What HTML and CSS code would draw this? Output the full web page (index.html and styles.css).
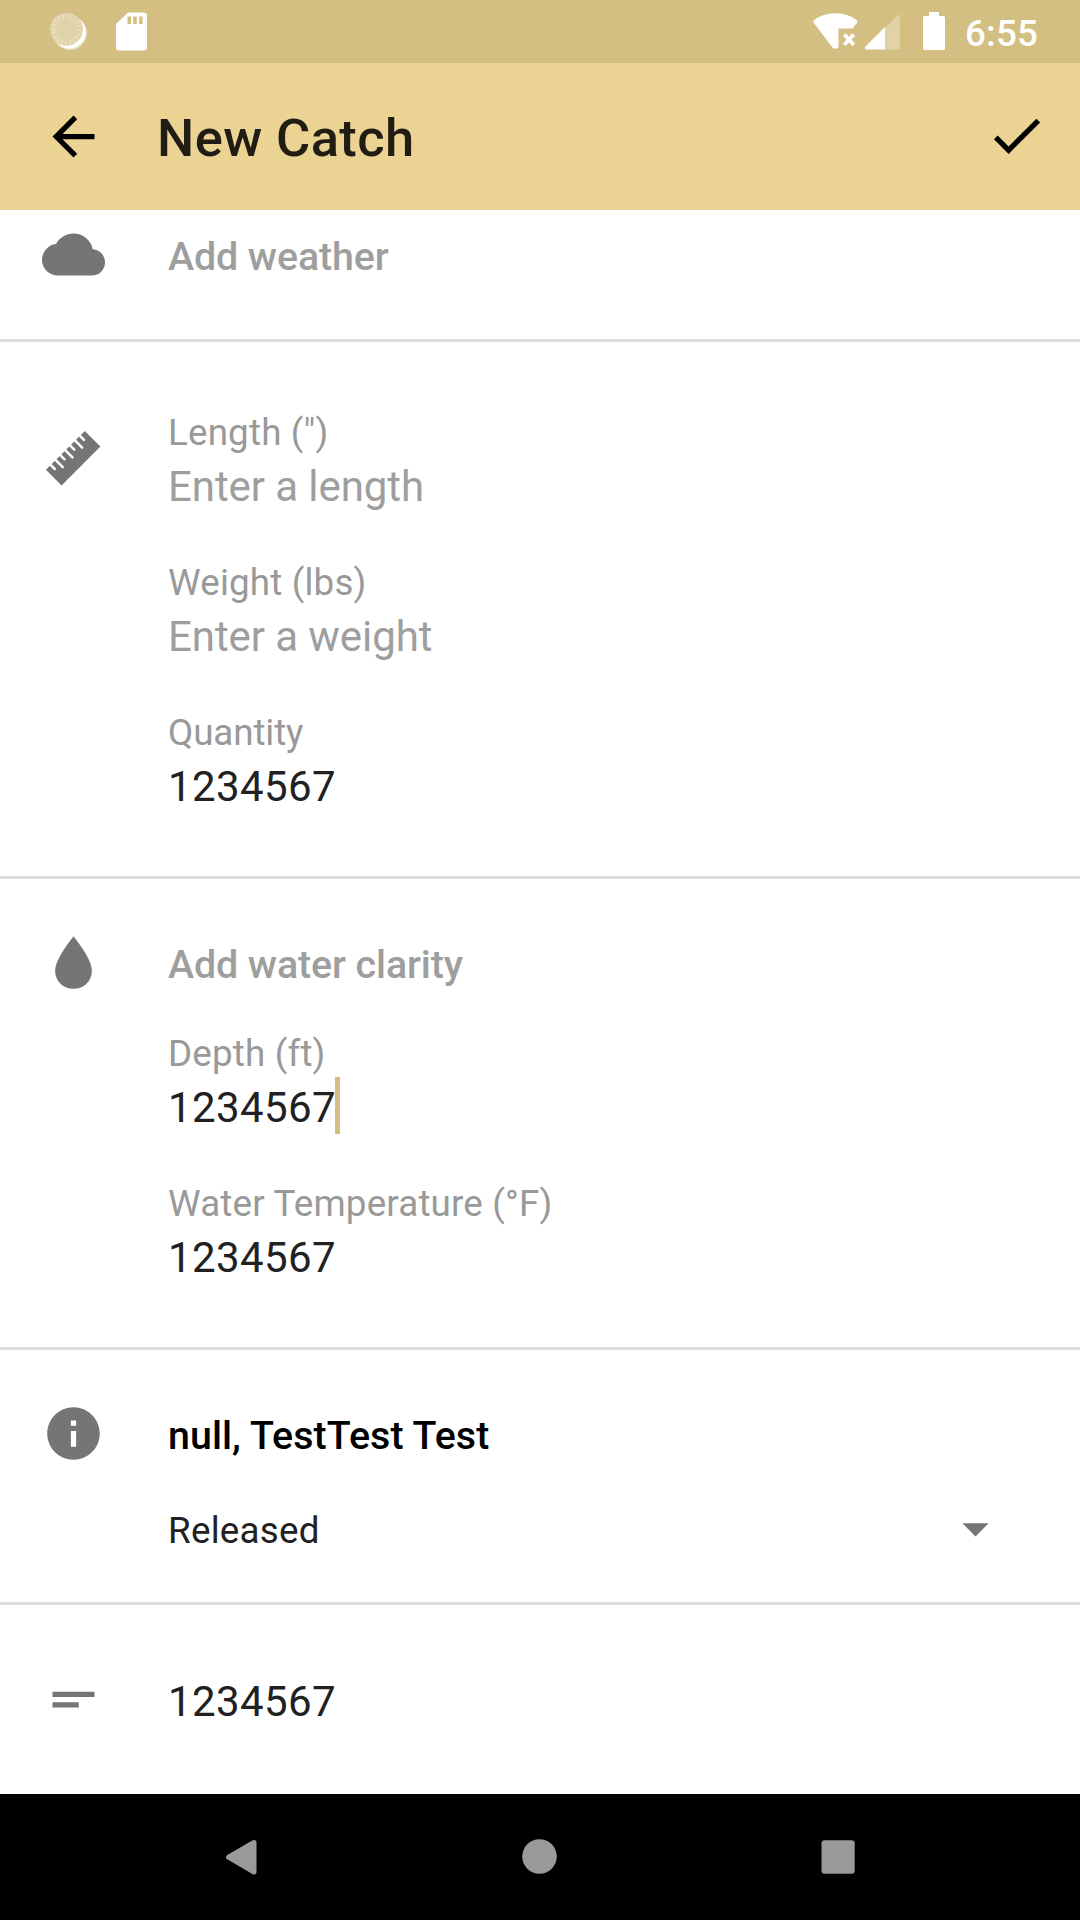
FILE: index.html
```html
<!DOCTYPE html>
<html lang="en">
<head>
<meta charset="utf-8">
<title>New Catch</title>
<link rel="stylesheet" href="styles.css">
</head>
<body>
<div class="screen">
  <div class="status-bar">
    <svg class="status-sync" viewBox="0 0 38 39">
      <circle cx="20" cy="21" r="17" fill="#e6dab8"/>
      <circle cx="19.500" cy="20.200" r="16.500" fill="#fff"/>
      <circle cx="16.500" cy="17.200" r="16.500" fill="#e1d3a9"/>
      <circle class="sync-ticks" cx="16.500" cy="17.500" r="13.200" pathLength="100"/>
    </svg>
    <svg class="status-sd" viewBox="0 0 31 39"><path fill="#fff" fill-rule="evenodd" d="M12 .5H27.500Q31 .5 31 4V35Q31 38.500 27.500 38.500H3.500Q0 38.500 0 35V12ZM11.500 4.500V12H15V4.500ZM17.300 4.500V12H20.800V4.500ZM23.100 4.500V12H26.600V4.500Z"/></svg>
    <div class="status-right">
      <svg class="status-wifi" viewBox="0 0 45 36">
        <path fill="#fff" d="M.5 9.500Q-.3 8 1.200 7Q10 .3 22.500 .3T43.500 7Q45 8 44.200 9.500L39.500 15.500H25.500V34.500Q22 37 19.500 34.500Z"/>
        <path stroke="#fff" stroke-width="3.800" d="M31.300 21.500L40.700 31.700M40.700 21.500L31.300 31.700"/>
      </svg>
      <svg class="status-signal" viewBox="0 0 35 36">
        <path fill="#e1d3a9" d="M20 14.500L32.500 1.200Q35 -.3 35 2.500V33.500Q35 35.500 33 35.500H20Z"/>
        <path fill="#fff" d="M20 13V35.500H1.500Q-1 35 .5 32.500Z"/>
      </svg>
      <svg class="status-battery" viewBox="0 0 22 38"><path fill="#fff" d="M6 0H16V4H20.500Q22 4 22 5.500V36.500Q22 38 20.500 38H1.500Q0 38 0 36.500V5.500Q0 4 1.500 4H6Z"/></svg>
      <span class="clock">6:55</span>
    </div>
  </div>

  <header class="app-bar">
    <svg class="icon" viewBox="0 0 24 24"><path d="M20 11H7.830l5.590-5.590L12 4l-8 8 8 8 1.410-1.410L7.830 13H20z"/></svg>
    <h1 class="title">New Catch</h1>
    <svg class="icon done" viewBox="0 0 24 24"><path d="M9 16.170L4.830 12l-1.420 1.410L9 19 21 7l-1.410-1.410z"/></svg>
  </header>

  <main class="form">
    <section class="section weather">
      <svg class="icon" viewBox="0 0 24 24"><path d="M19.350 10.040A7.490 7.490 0 0 0 12 4C9.110 4 6.600 5.640 5.350 8.040A5.994 5.994 0 0 0 0 14c0 3.310 2.690 6 6 6h13c2.760 0 5-2.240 5-5 0-2.640-2.050-4.780-4.650-4.960z"/></svg>
      <div class="fields"><div class="action">Add weather</div></div>
    </section>

    <section class="section size">
      <svg class="icon" viewBox="0 0 24 24">
        <path d="M16.300 1.500L22.250 7.450L7.450 22.250L1.500 16.300Z"/>
        <path class="slits" d="M3 14.100L4.900 16M4.850 12.250L7.900 15.300M6.700 10.400L8.600 12.300M8.550 8.550L11.600 11.600M10.400 6.700L12.300 8.600M12.250 4.850L15.300 7.900M14.100 3L16 4.900"/>
      </svg>
      <div class="fields">
        <div class="field"><div class="label">Length (")</div><div class="value hint">Enter a length</div></div>
        <div class="field"><div class="label">Weight (lbs)</div><div class="value hint">Enter a weight</div></div>
        <div class="field"><div class="label plain">Quantity</div><div class="value">1234567</div></div>
      </div>
    </section>

    <section class="section water">
      <svg class="icon" viewBox="0 0 24 24"><path d="M12 2C14.500 5.200 19 11.200 19 15.200C19 19.100 15.900 22 12 22S5 19.100 5 15.200C5 11.200 9.500 5.200 12 2Z"/></svg>
      <div class="fields">
        <div class="action">Add water clarity</div>
        <div class="field"><div class="label">Depth (ft)</div><div class="value">1234567<span class="caret"></span></div></div>
        <div class="field"><div class="label">Water Temperature (°F)</div><div class="value">1234567</div></div>
      </div>
    </section>

    <section class="section details">
      <svg class="icon" viewBox="0 0 24 24"><path d="M12 2C6.480 2 2 6.480 2 12s4.480 10 10 10 10-4.480 10-10S17.520 2 12 2zm1 15h-2v-6h2v6zm0-8h-2V7h2v2z"/></svg>
      <div class="fields">
        <div class="action filled">null, TestTest Test</div>
        <div class="select">
          <span class="select-text">Released</span>
          <svg class="icon" viewBox="0 0 24 24"><path d="M7 10l5 5 5-5z"/></svg>
        </div>
      </div>
    </section>

    <section class="section notes">
      <svg class="icon" viewBox="0 0 24 24"><path d="M4 9h16v2H4zm0 4h10v2H4z"/></svg>
      <div class="fields"><div class="value">1234567</div></div>
    </section>
  </main>

  <nav class="nav-bar">
    <svg class="nav-icon" viewBox="0 0 48 48"><path stroke="#999" stroke-width="5" stroke-linejoin="round" d="M11.500 24.200L37 9.500V39Z"/></svg>
    <svg class="nav-icon" viewBox="0 0 48 48"><circle cx="23.500" cy="23.500" r="17.300"/></svg>
    <svg class="nav-icon" viewBox="0 0 48 48"><rect x="7.500" y="7.300" width="33.200" height="33.400" rx="3"/></svg>
  </nav>
</div>
</body>
</html>
```
FILE: styles.css
```css
* { box-sizing: border-box; }

body {
  margin: 0;
  background: #fff;
  font-family: Roboto, sans-serif;
  color: #212121;
}

svg { display: block; flex: none; }

.screen {
  display: flex;
  flex-direction: column;
  width: 1080px;
  height: 1920px;
  overflow: hidden;
}

/* Status bar */
.status-bar {
  display: flex;
  align-items: flex-start;
  height: 63px;
  padding: 12px 42px 0 50px;
  background: #d4bf83;
}
.status-sync { width: 38px; height: 39px; }
.sync-ticks {
  fill: none;
  stroke: #eae0c3;
  stroke-width: 5;
  stroke-dasharray: 1.5 3.5;
}
.status-sd { width: 31px; height: 39px; margin-left: 28px; }
.status-right { display: flex; margin-left: auto; }
.status-wifi { width: 45px; height: 36px; margin-top: 1px; }
.status-signal { width: 35px; height: 36px; margin: 2px 0 0 7px; }
.status-battery { width: 22px; height: 38px; margin-left: 23px; }
.clock {
  width: 73px;
  margin-left: 20px;
  font-size: 36.75px;
  font-weight: 500;
  line-height: 43px;
  letter-spacing: 0.2px;
  color: #fff;
}

/* App bar */
.app-bar {
  display: flex;
  align-items: center;
  height: 147px;
  padding: 0 32px 0 42px;
  background: #ead393;
}
.icon { width: 63px; height: 63px; fill: #757575; }
.app-bar .icon { fill: #000; }
.app-bar .done { margin-bottom: 2px; }
.title {
  flex: 1;
  margin: 3px 0 0 52px;
  font-size: 52.5px;
  font-weight: 500;
  line-height: 62px;
  letter-spacing: 0.4px;
  color: #211d14;
}

/* Form sections */
.form { display: flex; flex-direction: column; flex: 1; }
.section {
  display: flex;
  align-items: flex-start;
  gap: 63px;
  padding: 0 84px 0 42px;
  border-bottom: 3px solid #ddd;
}
.slits {
  fill: none;
  stroke: #fff;
  stroke-width: 0.95;
  stroke-linecap: round;
}
.fields { flex: 1; display: flex; flex-direction: column; }
.field { height: 150px; }
.action {
  font-size: 39.375px;
  font-weight: 500;
  line-height: 46px;
  letter-spacing: -0.1px;
  color: #9e9e9e;
}
.action.filled { letter-spacing: 0.06px; color: #000; }
.label {
  font-size: 36.75px;
  line-height: 50px;
  letter-spacing: 0.18px;
  color: #999;
}
.label.plain { letter-spacing: -0.1px; }
.value {
  padding-top: 1px;
  font-size: 42px;
  line-height: 56px;
  letter-spacing: 0.4px;
  white-space: nowrap;
}
.value.hint { letter-spacing: -0.08px; color: #9e9e9e; }
.caret {
  display: inline-block;
  width: 5px;
  height: 57px;
  margin: -10px 0 -10px -1px;
  vertical-align: -2px;
  background: #d4bf83;
}

.weather { height: 132px; padding-top: 13px; }
.weather .action { margin-top: 11px; }

.size { height: 537px; padding-top: 66px; }
.size > .icon { margin-top: 19px; }

.water { height: 471px; padding-top: 52px; }
.water .action { margin: 11px 0 41px; }

.details { height: 255px; padding-top: 52px; }
.details .action { margin-top: 11px; }
.select {
  display: flex;
  align-items: center;
  justify-content: space-between;
  height: 63px;
  margin-top: 38px;
  font-size: 36.75px;
  line-height: 44px;
}
.select-text { padding-top: 5px; letter-spacing: 0.25px; }
.select .icon { margin-right: -11px; }

.notes { flex: 1; padding-top: 63px; border-bottom: 0; }
.notes .value { margin-top: 5px; }

/* System navigation */
.nav-bar {
  display: flex;
  justify-content: space-between;
  align-items: center;
  height: 126px;
  padding: 0 218px 0 217px;
  background: #000;
}
.nav-icon { width: 48px; height: 48px; fill: #999; }
```
